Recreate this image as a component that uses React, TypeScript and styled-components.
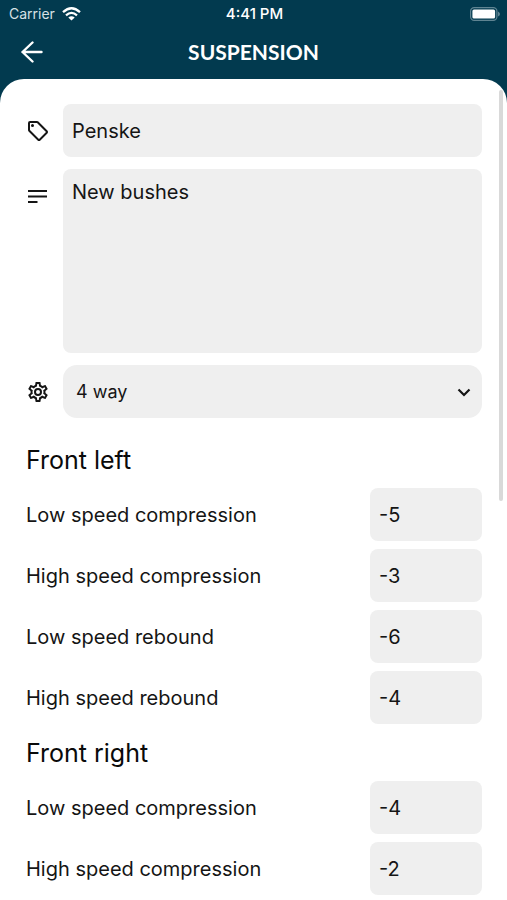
import React, { useState } from "react";
import styled, { createGlobalStyle } from "styled-components";

const teal = "#023a4f";
const fieldGrey = "#efefef";
const ink = "#151515";

const GlobalStyle = createGlobalStyle`
  *, *::before, *::after { box-sizing: border-box; }
  body {
    margin: 0;
    background: ${teal};
    color: ${ink};
    font-family: Inter, "Liberation Sans", sans-serif;
  }
`;

const Screen = styled.div`
  display: flex;
  flex-direction: column;
  min-height: 100vh;
`;

const StatusBar = styled.div`
  display: grid;
  grid-template-columns: 1fr auto 1fr;
  align-items: center;
  height: 27px;
  padding: 0 7px 0 9px;
  color: #fff;
  font-size: 14px;
  line-height: 16px;
`;

const Carrier = styled.span`
  display: flex;
  align-items: center;
  gap: 7px;
  color: #d7e1e5;
`;

const Clock = styled.time`
  font-size: 15px;
  font-weight: 500;
`;

const Battery = styled.svg`
  justify-self: end;
`;

const NavBar = styled.header`
  display: grid;
  grid-template-columns: 48px 1fr 48px;
  align-items: center;
  height: 52px;
  padding: 0 8px 2px;
  color: #fff;
`;

const BackButton = styled.button`
  display: flex;
  align-items: center;
  justify-content: center;
  height: 48px;
  padding: 0;
  border: 0;
  background: none;
  color: inherit;
  cursor: pointer;
`;

const Title = styled.h1`
  margin: 0;
  font-family: Lato, sans-serif;
  font-size: 21px;
  font-weight: 700;
  line-height: 24px;
  text-align: center;
`;

const Sheet = styled.main`
  position: relative;
  flex: 1;
  padding: 25px 25px 4px 26px;
  border-radius: 24px 24px 0 0;
  background: #fff;
  overflow: hidden;
`;

const ScrollThumb = styled.div`
  position: absolute;
  top: 11px;
  right: 4px;
  width: 4px;
  height: 50%;
  border-radius: 2px;
  background: #d9d9d9;
`;

const Form = styled.form`
  display: flex;
  flex-direction: column;
`;

const Details = styled.div`
  display: flex;
  flex-direction: column;
  gap: 12px;
`;

const DetailRow = styled.div`
  display: grid;
  grid-template-columns: 24px 1fr;
  column-gap: 13px;
  align-items: start;
`;

const IconLabel = styled.label`
  display: flex;
  align-items: center;
  height: 53px;
`;

const Icon = styled.svg`
  display: block;
  flex: none;
`;

const TextInput = styled.input`
  display: block;
  width: 100%;
  height: 53px;
  padding: 0 9px;
  border: 0;
  border-radius: 8px;
  background: ${fieldGrey};
  color: ${ink};
  font: inherit;
  font-size: 20px;
  line-height: 24px;
`;

const TextArea = styled.textarea`
  display: block;
  width: 100%;
  height: 184px;
  padding: 11px 9px;
  border: 0;
  border-radius: 8px;
  background: ${fieldGrey};
  color: ${ink};
  font: inherit;
  font-size: 20px;
  line-height: 24px;
  resize: none;
`;

const SelectBox = styled.div`
  display: grid;
  align-items: center;

  > * {
    grid-area: 1 / 1;
  }

  > svg {
    justify-self: end;
    margin-right: 8px;
    pointer-events: none;
  }
`;

const Select = styled.select`
  appearance: none;
  width: 100%;
  height: 53px;
  padding: 0 40px 0 13px;
  border: 0;
  border-radius: 14px;
  background: ${fieldGrey};
  color: ${ink};
  font: inherit;
  font-size: 18px;
  line-height: 24px;
`;

const Corner = styled.fieldset`
  display: flex;
  flex-direction: column;
  gap: 8px;
  min-width: 0;
  margin: 0;
  padding: 0;
  border: 0;
`;

const CornerTitle = styled.legend`
  padding: 14px 0 13px;
  font-size: 25px;
  line-height: 30px;
  color: #0a0a0a;

  ${Details} + ${Corner} & {
    padding: 27px 0 13px;
  }
`;

const Setting = styled.div`
  display: grid;
  grid-template-columns: 1fr 112px;
  align-items: center;
`;

const SettingLabel = styled.label`
  font-size: 20px;
  line-height: 24px;
`;

type CornerData = { title: string; settings: [string, string][] };

const corners: CornerData[] = [
  {
    title: "Front left",
    settings: [
      ["Low speed compression", "-5"],
      ["High speed compression", "-3"],
      ["Low speed rebound", "-6"],
      ["High speed rebound", "-4"],
    ],
  },
  {
    title: "Front right",
    settings: [
      ["Low speed compression", "-4"],
      ["High speed compression", "-2"],
    ],
  },
];

function WifiIcon() {
  return (
    <Icon width="19" height="14" viewBox="0 0 19 14" fill="none" stroke="#fff" strokeWidth="2.3" aria-hidden="true">
      <path d="M1 5.2Q9.5-2.6 18 5.2" />
      <path d="M4 8.3Q9.5 3.4 15 8.3" />
      <path d="M9.5 13.6L6.3 10.5Q9.5 8 12.7 10.5Z" fill="#fff" stroke="none" />
    </Icon>
  );
}

function BatteryIcon() {
  return (
    <Battery width="30" height="14" viewBox="0 0 30 14" aria-label="Battery full" role="img">
      <rect x="0.6" y="0.6" width="26.3" height="12.8" rx="3.6" fill="none" stroke="#5f8492" strokeWidth="1.2" />
      <rect x="2.4" y="2.4" width="22.7" height="9.2" rx="1.6" fill="#fff" />
      <path d="M28 4.5Q30 5.5 30 7Q30 8.500 28 9.5Z" fill="#5f8492" />
    </Battery>
  );
}

function SettingField({ id, label, initial }: { id: string; label: string; initial: string }) {
  const [value, setValue] = useState(initial);
  return (
    <Setting>
      <SettingLabel htmlFor={id}>{label}</SettingLabel>
      <TextInput id={id} inputMode="numeric" value={value} onChange={(e) => setValue(e.target.value)} />
    </Setting>
  );
}

export default function App() {
  return (
    <>
      <GlobalStyle />
      <Screen>
        <StatusBar>
          <Carrier>
            Carrier
            <WifiIcon />
          </Carrier>
          <Clock>4:41 PM</Clock>
          <BatteryIcon />
        </StatusBar>
        <NavBar>
          <BackButton type="button" aria-label="Back">
            <Icon width="22" height="22" viewBox="0 0 22 22" fill="none" stroke="currentColor" strokeWidth="2.4" strokeLinecap="round" strokeLinejoin="round">
              <path d="M20.5 11H1.5M11.500 1.500L1.500 11L11.500 20.500" />
            </Icon>
          </BackButton>
          <Title>SUSPENSION</Title>
        </NavBar>
        <Sheet>
          <Form onSubmit={(e) => e.preventDefault()}>
            <Details>
              <DetailRow>
                <IconLabel htmlFor="name" aria-label="Name">
                  <Icon width="24" height="24" viewBox="0 0 24 24" fill={ink}>
                    <path d="M21.41 11.58l-9-9A2 2 0 0 0 11 2H4a2 2 0 0 0-2 2v7a2 2 0 0 0 .59 1.42l9 9A2 2 0 0 0 13 22a2 2 0 0 0 1.41-.59l7-7A2 2 0 0 0 22 13a2 2 0 0 0-.59-1.42M13 20L4 11V4h7l9 9M6.5 5A1.5 1.5 0 1 1 5 6.5 1.5 1.5 0 0 1 6.5 5" />
                  </Icon>
                </IconLabel>
                <TextInput id="name" defaultValue="Penske" />
              </DetailRow>
              <DetailRow>
                <IconLabel htmlFor="notes" aria-label="Notes">
                  <Icon width="24" height="24" viewBox="0 0 24 24" fill="none" stroke={ink} strokeWidth="2">
                    <path d="M2 7H21M2 12.5H21M2 18H11.5" />
                  </Icon>
                </IconLabel>
                <TextArea id="notes" defaultValue="New bushes" />
              </DetailRow>
              <DetailRow>
                <IconLabel htmlFor="mode" aria-label="Adjustment">
                  <Icon width="24" height="24" viewBox="0 0 24 24" fill={ink}>
                    <path d="M12,8A4,4 0 0,1 16,12A4,4 0 0,1 12,16A4,4 0 0,1 8,12A4,4 0 0,1 12,8M12,10A2,2 0 0,0 10,12A2,2 0 0,0 12,14A2,2 0 0,0 14,12A2,2 0 0,0 12,10M10,22C9.75,22 9.54,21.82 9.5,21.58L9.13,18.93C8.5,18.68 7.96,18.34 7.44,17.94L4.95,18.95C4.73,19.03 4.46,18.95 4.34,18.73L2.34,15.27C2.21,15.05 2.27,14.78 2.46,14.63L4.57,12.97L4.5,12L4.57,11L2.46,9.37C2.27,9.22 2.21,8.95 2.34,8.73L4.34,5.27C4.46,5.05 4.73,4.96 4.95,5.05L7.44,6.05C7.96,5.66 8.5,5.32 9.13,5.07L9.5,2.42C9.54,2.18 9.75,2 10,2H14C14.25,2 14.46,2.18 14.5,2.42L14.87,5.07C15.5,5.32 16.04,5.66 16.56,6.05L19.05,5.05C19.27,4.96 19.54,5.05 19.66,5.27L21.66,8.73C21.79,8.95 21.73,9.22 21.54,9.37L19.43,11L19.5,12L19.43,13L21.54,14.63C21.73,14.78 21.79,15.05 21.66,15.27L19.66,18.73C19.54,18.95 19.27,19.04 19.05,18.95L16.56,17.95C16.04,18.34 15.5,18.68 14.87,18.93L14.5,21.58C14.46,21.82 14.25,22 14,22H10M11.25,4L10.88,6.61C9.68,6.86 8.62,7.5 7.85,8.39L5.44,7.35L4.69,8.65L6.8,10.2C6.4,11.37 6.4,12.64 6.8,13.8L4.68,15.36L5.43,16.66L7.86,15.62C8.63,16.5 9.68,17.14 10.87,17.38L11.24,20H12.76L13.13,17.39C14.32,17.14 15.37,16.5 16.14,15.62L18.57,16.66L19.32,15.36L17.2,13.81C17.6,12.64 17.6,11.37 17.2,10.2L19.31,8.65L18.56,7.35L16.15,8.39C15.38,7.5 14.32,6.86 13.12,6.62L12.75,4H11.25Z" />
                  </Icon>
                </IconLabel>
                <SelectBox>
                  <Select id="mode" defaultValue="4 way">
                    <option>4 way</option>
                    <option>2 way</option>
                  </Select>
                  <Icon width="20" height="20" viewBox="0 0 20 20" fill="none" stroke={ink} strokeWidth="2.2" aria-hidden="true">
                    <path d="M4.5 7.5L10 13L15.5 7.5" />
                  </Icon>
                </SelectBox>
              </DetailRow>
            </Details>
            {corners.map((corner, c) => (
              <Corner key={corner.title}>
                <CornerTitle>{corner.title}</CornerTitle>
                {corner.settings.map(([label, value], s) => (
                  <SettingField key={label} id={`setting-${c}-${s}`} label={label} initial={value} />
                ))}
              </Corner>
            ))}
          </Form>
          <ScrollThumb aria-hidden="true" />
        </Sheet>
      </Screen>
    </>
  );
}
